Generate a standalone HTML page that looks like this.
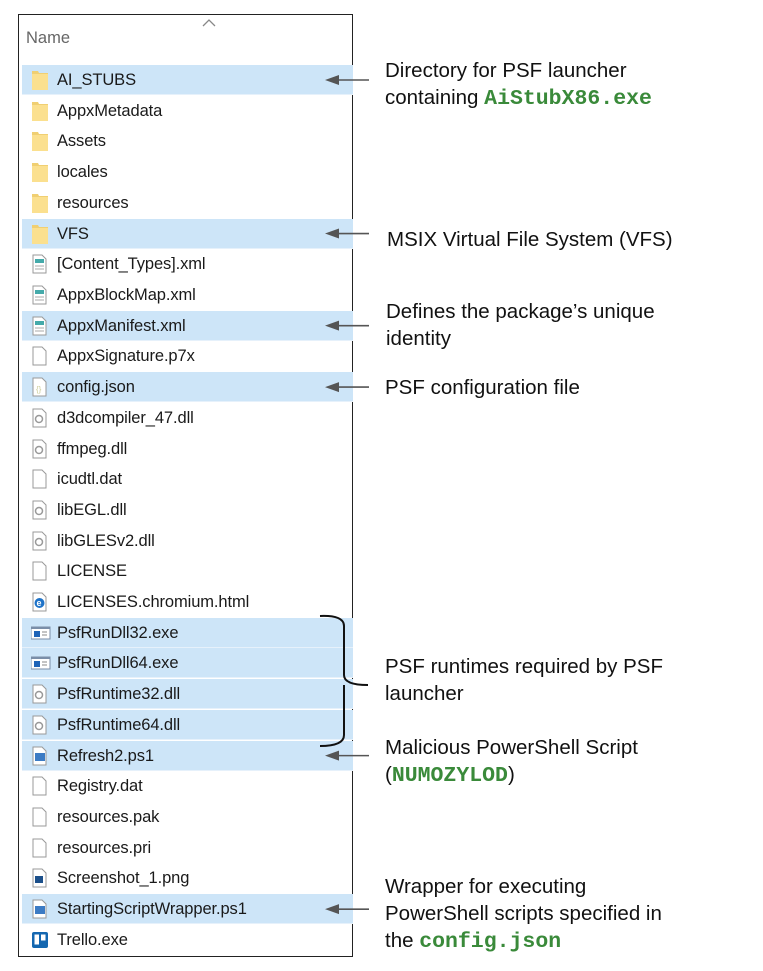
<!DOCTYPE html>
<html><head><meta charset="utf-8"><style>
body{margin:0;width:763px;height:971px;background:#fff;position:relative;overflow:hidden;font-family:"Liberation Sans",sans-serif}
.box{position:absolute;left:18px;top:14px;width:335px;height:943px;border:1.5px solid #222;box-sizing:border-box}
.row{position:absolute;left:22px;width:331px;height:30px}
.hl{background:#cde5f8;border-bottom:1px solid #e6f1fb;box-sizing:border-box}
.nm{position:absolute;left:57px;font-size:16.5px;color:#1a1a1a;line-height:30px;letter-spacing:-0.1px}
.ic{position:absolute;left:31px}
.a{position:absolute;left:385px;font-size:20.5px;color:#111;line-height:27px}
code{font-family:"Liberation Mono",monospace;font-weight:bold;color:#3a8a3a;font-size:21.5px}
</style></head><body>
<div class="box"></div>
<div style="position:absolute;left:26px;top:29px;font-size:16.5px;color:#666">Name</div>
<svg style="position:absolute;left:202px;top:19px" width="14" height="8"><path d="M1 7 L7 1 L13 7" stroke="#888" fill="none" stroke-width="1.3"/></svg>
<div id="rows"></div>
<svg width="763" height="971" style="position:absolute;left:0;top:0" id="ov"></svg>
<div class="a" style="top:57px">Directory for PSF launcher<br>containing <code>AiStubX86.exe</code></div>
<div class="a" style="top:226px;left:387px">MSIX Virtual File System (VFS)</div>
<div class="a" style="top:298px;left:386px">Defines the package’s unique<br>identity</div>
<div class="a" style="top:374px">PSF configuration file</div>
<div class="a" style="top:653px">PSF runtimes required by PSF<br>launcher</div>
<div class="a" style="top:734px">Malicious PowerShell Script<br>(<code>NUMOZYLOD</code>)</div>
<div class="a" style="top:873px">Wrapper for executing<br>PowerShell scripts specified in<br>the <code>config.json</code></div>
<script>
var items=[["AI_STUBS","f",1],["AppxMetadata","f"],["Assets","f"],["locales","f"],["resources","f"],["VFS","f",1],["[Content_Types].xml","x"],["AppxBlockMap.xml","x"],["AppxManifest.xml","x",1],["AppxSignature.p7x","b"],["config.json","j",1],["d3dcompiler_47.dll","d"],["ffmpeg.dll","d"],["icudtl.dat","b"],["libEGL.dll","d"],["libGLESv2.dll","d"],["LICENSE","b"],["LICENSES.chromium.html","e"],["PsfRunDll32.exe","p",1],["PsfRunDll64.exe","p",1],["PsfRuntime32.dll","d",1],["PsfRuntime64.dll","d",1],["Refresh2.ps1","s",1],["Registry.dat","b"],["resources.pak","b"],["resources.pri","b"],["Screenshot_1.png","i"],["StartingScriptWrapper.ps1","s",1],["Trello.exe","t"]];
var h="";
function icon(t){
 var doc='<path d="M2 1h9l4 4v14H2z" fill="#fff" stroke="#999"/>';
 if(t=="f")return '<path d="M1 1h6l1 2h9v17H1z" fill="#f0cf72"/><path d="M1 4h16v16H1z" fill="#fbe08f"/>';
 if(t=="x")return doc+'<rect x="4" y="5" width="9" height="4" fill="#4aa"/><path d="M4 12h9M4 15h9" stroke="#aaa"/>';
 if(t=="b")return doc;
 if(t=="j")return doc+'<text x="5" y="15" font-size="8" fill="#cc9">{}</text>';
 if(t=="d")return doc+'<circle cx="8" cy="11" r="3.5" fill="none" stroke="#999" stroke-width="1.5"/>';
 if(t=="e")return doc+'<circle cx="8.5" cy="11" r="5" fill="#1e73c8"/><text x="5.5" y="14" font-size="9" fill="#fff" font-weight="bold">e</text>';
 if(t=="p")return '<rect x="0" y="4" width="19" height="12" fill="#fff" stroke="#7a8ea8"/><rect x="0" y="4" width="19" height="2" fill="#7a8ea8"/><rect x="3" y="8" width="6" height="6" fill="#1d63b8"/><path d="M11 9h5M11 12h5" stroke="#888"/>';
 if(t=="s")return doc+'<rect x="4" y="7" width="10" height="8" fill="#3c7bc4"/>';
 if(t=="i")return doc+'<rect x="4" y="8" width="8" height="7" fill="#1b4f8a"/>';
 if(t=="t")return '<rect x="1" y="2" width="16" height="16" rx="2" fill="#1467b0"/><rect x="3.5" y="4.5" width="4.5" height="10" fill="#fff"/><rect x="10" y="4.5" width="4.5" height="6" fill="#fff"/>';
}
var ov="";
items.forEach(function(it,i){
 var c=80+i*30.71, top=c-15;
 h+='<div class="row'+(it[2]?' hl':'')+'" style="top:'+top+'px"></div>';
 h+='<svg class="ic" style="top:'+(c-10)+'px" width="20" height="20">'+icon(it[1])+'</svg>';
 h+='<div class="nm" style="top:'+top+'px">'+it[0].replace(/</g,"&lt;")+'</div>';
 if(it[2]&&[0,5,8,10,22,27].indexOf(i)>=0){
  ov+='<path d="M337 '+c+'H369" stroke="#555" stroke-width="1.6"/><path d="M325 '+c+'L339 '+(c-5)+'L339 '+(c+5)+'z" fill="#555"/>';
 }
});
ov+='<path d="M320 616Q344 615 344 626V675Q344 685 368 685M344 685Q344 685 344 695V735Q344 746 320 746" stroke="#111" stroke-width="2" fill="none"/>';
document.getElementById("rows").innerHTML=h;
document.getElementById("ov").innerHTML=ov;
</script>
</body></html>
